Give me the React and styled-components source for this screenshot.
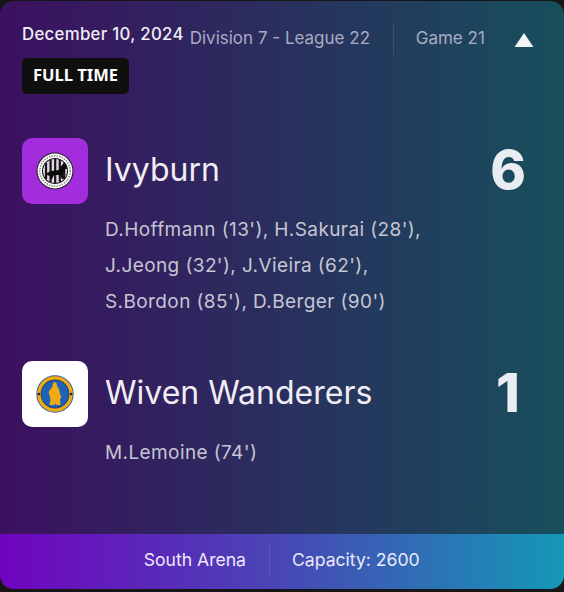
import styled, { createGlobalStyle } from "styled-components";

const GlobalStyle = createGlobalStyle`
  html, body {
    margin: 0;
    padding: 0;
    background: #161616;
  }
  * {
    box-sizing: border-box;
  }
`;

const Card = styled.div`
  width: 564px;
  height: 588px;
  margin-top: 1px;
  display: flex;
  flex-direction: column;
  border-radius: 14px;
  overflow: hidden;
  font-family: Inter, "Noto Sans", sans-serif;
  background: linear-gradient(90deg, #3c1060 0%, #174f5c 100%);
`;

const Main = styled.div`
  flex: 1;
  padding: 23px 22px 0;
`;

const Header = styled.div`
  display: flex;
  align-items: flex-start;
`;

const DateBlock = styled.div`
  display: flex;
  flex-direction: column;
  align-items: flex-start;
  gap: 14px;
`;

const DateText = styled.div`
  font-size: 16.8px;
  line-height: 20px;
  letter-spacing: 0.3px;
  font-weight: 500;
  color: #f1edf5;
  white-space: nowrap;
`;

const Badge = styled.div`
  background: #0f0f10;
  color: #fff;
  border-radius: 5px;
  font-family: "Noto Sans", sans-serif;
  font-size: 16.5px;
  font-weight: 700;
  line-height: 34px;
  height: 36px;
  width: 107px;
  text-align: center;
`;

const Meta = styled.div`
  display: flex;
  align-items: center;
  height: 32px;
  margin-top: -1px;
  font-size: 17px;
  color: #a9abc2;
  white-space: nowrap;
`;

const Division = styled.span`
  margin-left: 6px;
  width: 204px;
  height: 32px;
  line-height: 30px;
  border-right: 1px solid rgba(255, 255, 255, 0.1);
`;

const Game = styled.span`
  margin-left: 22px;
  width: 98px;
  line-height: 30px;
  height: 32px;
`;

const Arrow = styled.svg`
  margin-top: 2px;
`;

const Team = styled.div`
  display: flex;
  align-items: center;
  height: 66px;
  margin-top: ${(p) => p.$top}px;
`;

const Logo = styled.div`
  width: 66px;
  height: 66px;
  border-radius: 10px;
  background: ${(p) => p.$bg};
  display: flex;
  align-items: center;
  justify-content: center;
  flex-shrink: 0;
`;

const TeamName = styled.div`
  flex: 1;
  margin-left: 17px;
  height: 66px;
  line-height: 64px;
  font-size: 32px;
  color: #f1edf5;
`;

const Score = styled.div`
  width: 68px;
  height: 66px;
  line-height: 64px;
  font-size: 54px;
  font-weight: 800;
  color: #e9ecf1;
  text-align: center;
`;

const Scorers = styled.div`
  margin: 8px 0 0 83px;
  font-size: 19px;
  line-height: 36px;
  letter-spacing: 0.4px;
  color: #c6c6d2;
`;

const Footer = styled.div`
  height: 55px;
  flex-shrink: 0;
  display: flex;
  align-items: center;
  justify-content: center;
  background: linear-gradient(90deg, #7004bf 0%, #4a44b5 48%, #1498b6 100%);
  color: #eee8fb;
  font-size: 17.6px;
`;

const Arena = styled.div`
  width: 270px;
  height: 33px;
  line-height: 30px;
  text-align: right;
  padding-right: 23px;
  border-right: 1px solid rgba(255, 255, 255, 0.12);
`;

const Capacity = styled.div`
  flex: 1;
  padding-left: 22px;
  line-height: 30px;
  height: 33px;
`;

const IvyburnCrest = () => (
  <svg width="38" height="38" viewBox="0 0 38 38">
    <circle cx="19" cy="19" r="18.5" fill="#222" />
    <circle cx="19" cy="19" r="17.4" fill="#fff" />
    <circle cx="19" cy="19" r="15.2" fill="none" stroke="#777" strokeWidth="1.4" strokeDasharray="1.4 1.2" />
    <circle cx="19" cy="19" r="13" fill="#111" />
    <circle cx="19" cy="19" r="12" fill="#e2d8e8" />
    <path d="M10 11v16M14.6 8v22M19.2 7v24M23.8 8v22M28.2 11v16" stroke="#151515" strokeWidth="2.2" />
    <path d="M9 26l2-5 4-2 8-1 3-5 2-2 2 2 1 4-2 0-1 3-1 2 1 5h-2l-2-4h-6l-2 4h-2l0-3-3-1-1 3z" fill="#0a0a0a" />
  </svg>
);

const WivenCrest = () => (
  <svg width="38" height="38" viewBox="0 0 38 38">
    <circle cx="19" cy="19" r="18.7" fill="#34609e" />
    <circle cx="19" cy="19" r="17.8" fill="#f0ab16" />
    <circle cx="19" cy="19" r="14.4" fill="#2a3f66" />
    <circle cx="19" cy="19" r="13.6" fill="#1f62b8" />
    <circle cx="2.8" cy="19" r="1.3" fill="#1d1d1d" />
    <circle cx="35.2" cy="19" r="1.3" fill="#1d1d1d" />
    <path d="M17 8l1.5-1 2 1 .5 3 2 3 1 5 1.5 3-1.5 2 .5 6h-4l-1-2-1 2h-5l1-5-1-5-1-3 3-4 1-2z" fill="#f0ab16" />
  </svg>
);

export default function App() {
  return (
    <>
      <GlobalStyle />
      <Card>
        <Main>
          <Header>
            <DateBlock>
              <DateText>December 10, 2024</DateText>
              <Badge>FULL TIME</Badge>
            </DateBlock>
            <Meta>
              <Division>Division 7 - League 22</Division>
              <Game>Game 21</Game>
              <Arrow width="20" height="14" viewBox="0 0 20 14">
                <path d="M10 0l9.5 14H.5z" fill="#f1f3f5" />
              </Arrow>
            </Meta>
          </Header>
          <Team $top={44}>
            <Logo $bg="#a32ddc">
              <IvyburnCrest />
            </Logo>
            <TeamName>Ivyburn</TeamName>
            <Score>6</Score>
          </Team>
          <Scorers>
            D.Hoffmann (13'), H.Sakurai (28'),
            <br />
            J.Jeong (32'), J.Vieira (62'),
            <br />
            S.Bordon (85'), D.Berger (90')
          </Scorers>
          <Team $top={41}>
            <Logo $bg="#fff">
              <WivenCrest />
            </Logo>
            <TeamName>Wiven Wanderers</TeamName>
            <Score>1</Score>
          </Team>
          <Scorers>M.Lemoine (74')</Scorers>
        </Main>
        <Footer>
          <Arena>South Arena</Arena>
          <Capacity>Capacity: 2600</Capacity>
        </Footer>
      </Card>
    </>
  );
}
